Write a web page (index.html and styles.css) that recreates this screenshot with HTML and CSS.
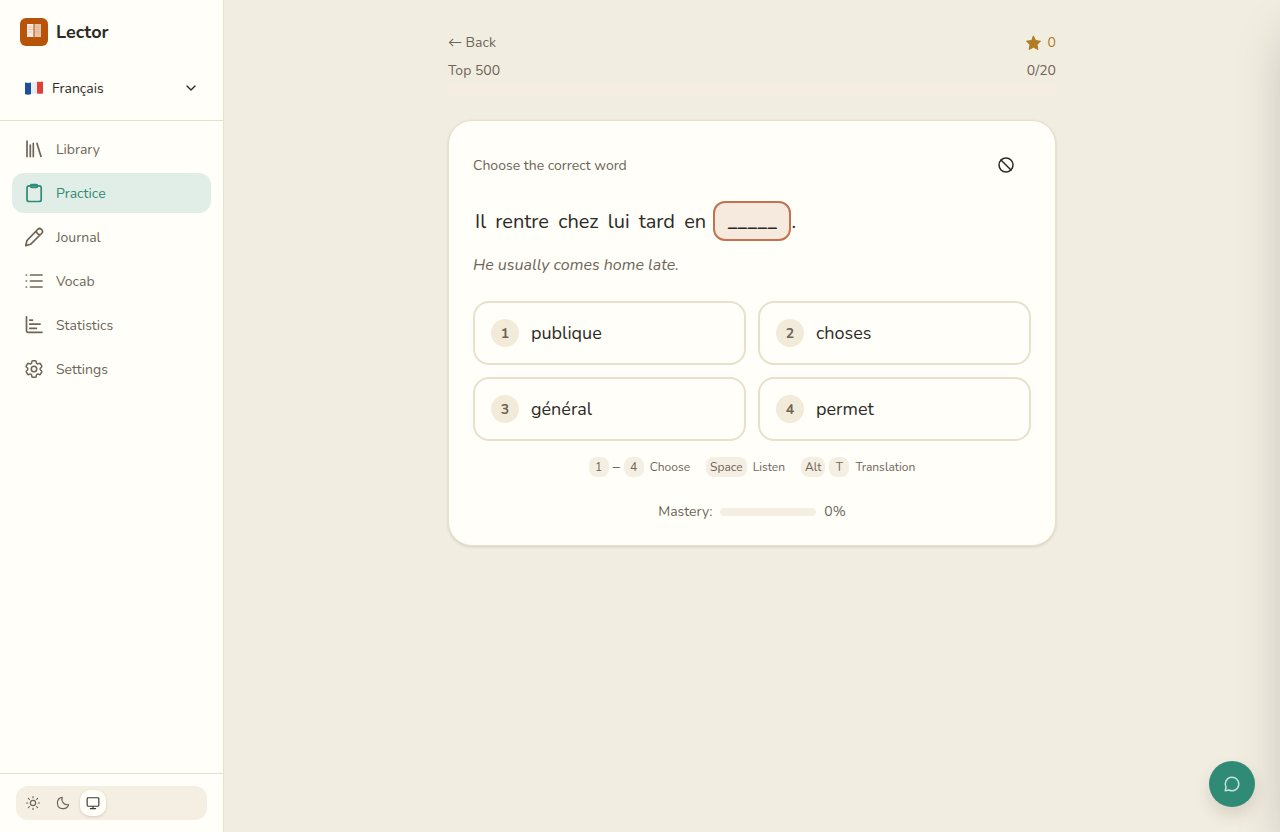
FILE: index.html
```html
<!DOCTYPE html>
<html lang="en">
<head>
<meta charset="utf-8">
<meta name="viewport" content="width=device-width, initial-scale=1">
<title>Lector</title>
<link rel="stylesheet" href="styles.css">
</head>
<body>
<div class="app">
  <aside class="sidebar">
    <div class="brand">
      <svg class="brand-logo" viewBox="0 0 28 28" aria-hidden="true">
        <rect width="28" height="28" rx="6" fill="#b8540a"/>
        <path d="M7 6h6.500v13H7z" fill="#f7e9dd"/>
        <path d="M14.500 6H21v13h-6.500z" fill="#e6c3a6"/>
        <path d="M13.500 6.500h1V19.500h-1z" fill="#cf8a57"/>
        <path d="M8.500 9h3.500M8.500 11.500h4M8.500 14h3M16 9h3.500M16 11.500h3.500M16 14h3" stroke="#d9b69b" stroke-width=".7"/>
      </svg>
      <span class="brand-name">Lector</span>
    </div>
    <div class="language">
      <svg class="flag" viewBox="0 0 20 16" aria-hidden="true">
        <path d="M1 2.500q3 .9 6 .1v11.600q-3 .8-6 .1z" fill="#1d4f9c"/>
        <path d="M7 2.600q3-1 6-.8v11.700q-3-.1-6 .7z" fill="#e9ecef"/>
        <path d="M13 1.800q3 .2 6-.3v12q-3 .5-6 0z" fill="#df3e3b"/>
      </svg>
      <select class="language-select" aria-label="Language"><option>Français</option></select>
      <svg class="icon-chevron" viewBox="0 0 24 24" aria-hidden="true"><path d="m6 9 6 6 6-6"/></svg>
    </div>
    <nav class="nav">
      <a class="nav-item" href="#library">
        <svg class="icon" viewBox="0 0 20 20"><path d="M3 2.200v15.400M6.300 6.200v11.400M9.300 4.400v13.200M13 4.400l4 13"/></svg>Library</a>
      <a class="nav-item active" href="#practice" aria-current="page">
        <svg class="icon" viewBox="0 0 20 20"><rect x="3" y="2.800" width="14.200" height="15.700" rx="2"/><rect x="6.500" y="1.500" width="7" height="3" rx="1.300"/></svg>Practice</a>
      <a class="nav-item" href="#journal">
        <svg class="icon" viewBox="0 0 20 20"><path d="M13.600 2.500a2.800 2.800 0 0 1 4 4L6.500 17.300 1.700 18.600l1.200-4.900zM12.400 3.700a3.800 3.800 0 0 0 4 4"/></svg>Journal</a>
      <a class="nav-item" href="#vocab">
        <svg class="icon" viewBox="0 0 20 20"><path d="M6.500 4h11.500M6.500 10h11.500M6.500 16h11.500M2.300 4h.2M2.300 10h.2M2.300 16h.2"/></svg>Vocab</a>
      <a class="nav-item" href="#statistics">
        <svg class="icon" viewBox="0 0 20 20"><path d="M2.500 1.800v14a1.500 1.500 0 0 0 1.500 1.500h14M5.800 5.100h2.700M5.800 9.200h10.200M5.800 13.300h6.600"/></svg>Statistics</a>
      <a class="nav-item" href="#settings">
        <svg class="icon" viewBox="1 1 22 22"><path d="M9.594 3.940c.09-.542.56-.94 1.110-.94h2.593c.55 0 1.020.398 1.110.94l.213 1.281c.063.374.313.686.645.87.074.04.147.083.22.127.325.196.72.257 1.075.124l1.217-.456a1.125 1.125 0 0 1 1.370.49l1.296 2.247a1.125 1.125 0 0 1-.26 1.431l-1.003.827c-.293.241-.438.613-.43.992a7.723 7.723 0 0 1 0 .255c-.008.378.137.75.43.991l1.004.827c.424.35.534.955.26 1.430l-1.298 2.247a1.125 1.125 0 0 1-1.369.491l-1.217-.456c-.355-.133-.75-.072-1.076.124a6.470 6.470 0 0 1-.22.128c-.331.183-.581.495-.644.869l-.213 1.281c-.09.543-.56.94-1.110.94h-2.594c-.55 0-1.019-.398-1.110-.94l-.213-1.281c-.062-.374-.312-.686-.644-.87a6.520 6.520 0 0 1-.22-.127c-.325-.196-.72-.257-1.076-.124l-1.217.456a1.125 1.125 0 0 1-1.369-.49l-1.297-2.247a1.125 1.125 0 0 1 .26-1.431l1.004-.827c.292-.24.437-.613.43-.991a6.932 6.932 0 0 1 0-.255c.007-.38-.138-.751-.43-.992l-1.004-.827a1.125 1.125 0 0 1-.26-1.430l1.297-2.247a1.125 1.125 0 0 1 1.370-.491l1.216.456c.356.133.751.072 1.076-.124.072-.044.146-.086.22-.128.332-.183.582-.495.644-.869z"/><circle cx="12" cy="12" r="3"/></svg>Settings</a>
    </nav>
    <div class="sidebar-footer">
      <div class="theme-switch" role="group" aria-label="Theme">
        <button class="theme-button" type="button" aria-label="Light"><svg class="icon-small" viewBox="0 0 24 24"><circle cx="12" cy="12" r="4.500"/><path d="M12 1v2M12 21v2M1 12h2M21 12h2M4.200 4.200l1.500 1.500M18.300 18.300l1.500 1.500M4.200 19.800l1.500-1.500M18.300 5.700l1.500-1.500"/></svg></button>
        <button class="theme-button" type="button" aria-label="Dark"><svg class="icon-small" viewBox="0 0 24 24"><path d="M10.500 2.300A9.800 9.800 0 1 0 21.700 14.500C15.500 16.500 8.500 11 10.500 2.300z"/></svg></button>
        <button class="theme-button selected" type="button" aria-label="System" aria-pressed="true"><svg class="icon-small" viewBox="0 0 24 24"><rect x="2" y="3" width="20" height="14.500" rx="1.500"/><path d="M12 17.500v4M7.500 21.500h9"/></svg></button>
      </div>
    </div>
  </aside>

  <main class="main">
    <div class="practice">
      <header class="session">
        <div class="session-row">
          <a class="back" href="#back">← Back</a>
          <span class="score"><svg class="star" viewBox="0 0 16 16" aria-hidden="true"><path d="m7.500 1.200 2.100 4.400 4.900.6-3.500 3.400.9 4.900-4.400-2.300-4.400 2.300.9-4.900L.5 6.200l4.900-.6z"/></svg>0</span>
        </div>
        <div class="session-row"><span>Top 500</span><span>0/20</span></div>
        <div class="session-progress" role="progressbar" aria-label="Session progress" aria-valuenow="0" aria-valuemin="0" aria-valuemax="20"></div>
      </header>

      <section class="card">
        <div class="card-header">
          <span>Choose the correct word</span>
          <button class="ignore-button" type="button" aria-label="Ignore this sentence"><svg class="icon-ban" viewBox="0 0 20 20"><circle cx="10" cy="10" r="7"/><path d="m5 5 10 10"/></svg></button>
        </div>
        <p class="sentence"><span class="word">Il</span> <span class="word">rentre</span> <span class="word">chez</span> <span class="word">lui</span> <span class="word">tard</span> <span class="word">en</span> <span class="blank">_____</span>.</p>
        <p class="translation">He usually comes home late.</p>
        <div class="options">
          <button class="option" type="button"><span class="option-number">1</span>publique</button>
          <button class="option" type="button"><span class="option-number">2</span>choses</button>
          <button class="option" type="button"><span class="option-number">3</span>général</button>
          <button class="option" type="button"><span class="option-number">4</span>permet</button>
        </div>
        <div class="hints">
          <span class="hint"><span class="keys"><kbd>1</kbd><span class="range">–</span><kbd>4</kbd></span>Choose</span>
          <span class="hint"><kbd>Space</kbd>Listen</span>
          <span class="hint"><span class="keys"><kbd>Alt</kbd><kbd>T</kbd></span>Translation</span>
        </div>
        <div class="mastery"><span>Mastery:</span><div class="mastery-bar" role="progressbar" aria-label="Mastery" aria-valuenow="0"></div><span>0%</span></div>
      </section>
    </div>
  </main>
</div>
<div class="drawer" aria-hidden="true"></div>
<button class="chat-button" type="button" aria-label="Open chat"><svg class="icon-chat" viewBox="0 0 24 24"><path d="M3 21l1-5A9 9 0 1 1 8 20z"/></svg></button>
</body>
</html>
```

FILE: styles.css
```css
* { box-sizing: border-box; }

body {
  margin: 0;
  background: #f2ede1;
  color: #2d2a26;
  font-family: Nunito, Lato, "Open Sans", sans-serif;
  font-size: 14px;
  line-height: 21px;
}

button, select { font: inherit; color: inherit; }
button { cursor: pointer; border: 0; background: none; }
p { margin: 0; }
a { color: inherit; text-decoration: none; }
svg { display: block; flex: none; fill: none; stroke-linecap: round; stroke-linejoin: round; }

.app { display: flex; min-height: 100vh; }

.sidebar {
  display: flex;
  flex-direction: column;
  flex: none;
  width: 224px;
  height: 100vh;
  position: sticky;
  top: 0;
  background: #fffef9;
  border-right: 1px solid #e8e0cc;
}
.brand { display: flex; align-items: center; gap: 8px; padding: 18px 20px 0; }
.brand-logo { width: 28px; height: 28px; }
.brand-name { font-size: 18px; line-height: 28px; font-weight: 700; }
.language {
  display: flex;
  align-items: center;
  gap: 8px;
  padding: 27px 24px 17px;
  border-bottom: 1px solid #e8e0cc;
}
.flag { width: 20px; height: 16px; }
.language-select {
  flex: 1;
  min-width: 0;
  height: 30px;
  padding: 0;
  border: 0;
  background: none;
  appearance: none;
}
.icon-chevron { width: 16px; height: 16px; stroke: #2d2a26; stroke-width: 2; pointer-events: none; }

.nav { display: flex; flex-direction: column; gap: 4px; padding: 8px 12px; flex: 1; }
.nav-item {
  display: flex;
  align-items: center;
  gap: 12px;
  height: 40px;
  padding: 0 12px;
  border-radius: 12px;
  color: #6e6558;
}
.nav-item.active { background: #e1eee8; color: #2f8a76; }
.icon { width: 20px; height: 20px; stroke: currentColor; stroke-width: 1.7; }

.sidebar-footer { padding: 12px 16px; border-top: 1px solid #e8e0cc; }
.theme-switch { display: flex; gap: 4px; padding: 4px; border-radius: 12px; background: #f5eee2; }
.theme-button {
  display: grid;
  place-items: center;
  width: 26px;
  height: 26px;
  padding: 0;
  border-radius: 10px;
  color: #6e6558;
}
.theme-button.selected { background: #fffef9; color: #3b3834; box-shadow: 0 1px 3px rgba(60, 50, 30, .18); }
.icon-small { width: 14px; height: 14px; stroke: currentColor; stroke-width: 2; }

.main { flex: 1; min-width: 0; padding: 32px; }
.practice { max-width: 608px; margin: 0 auto; }
.session { color: #6e6558; }
.session-row { display: flex; justify-content: space-between; margin-bottom: 7px; }
.session-row + .session-row { margin-bottom: 3px; }
.score { display: flex; align-items: center; gap: 6px; color: #b07d22; }
.star { width: 16px; height: 16px; fill: #b07d22; stroke: #b07d22; stroke-width: 1; }
.session-progress { height: 12px; border-radius: 6px; background: #f5ede2; }

.card {
  margin-top: 24px;
  padding: 24px 24px 23px;
  border: 1px solid #e8e0cc;
  border-radius: 24px;
  background: #fffef9;
  box-shadow: 0 1px 3px rgba(60, 50, 30, .16);
}
.card-header { display: flex; align-items: center; justify-content: space-between; height: 40px; color: #6e6558; }
.ignore-button { display: grid; place-items: center; height: 40px; padding: 0 15px; }
.icon-ban { width: 20px; height: 20px; stroke: #2d2a26; stroke-width: 1.5; }

.sentence { margin-top: 16px; font-size: 20px; line-height: 42px; }
.word { padding: 0 2px; }
.blank {
  display: inline-block;
  height: 40px;
  padding: 0 12px;
  border: 2px solid #c4714f;
  border-radius: 12px;
  background: #f6eadf;
  line-height: 38px;
  font-weight: 700;
  vertical-align: top;
}
.translation { margin-top: 10px; color: #6e6558; font-size: 16px; line-height: 24px; font-style: italic; }

.options { display: grid; grid-template-columns: 1fr 1fr; gap: 12px; margin-top: 24px; }
.option {
  display: flex;
  align-items: center;
  gap: 12px;
  height: 64px;
  padding: 0 16px;
  border: 2px solid #e8e0cc;
  border-radius: 16px;
  font-size: 18px;
  text-align: left;
}
.option-number {
  display: grid;
  place-items: center;
  width: 28px;
  height: 28px;
  border-radius: 50%;
  background: #f2ebda;
  color: #6e6558;
  font-size: 14px;
  font-weight: 700;
}

.hints { display: flex; justify-content: center; gap: 16px; margin-top: 16px; color: #6e6558; font-size: 12px; line-height: 20px; }
.hint { display: flex; align-items: center; gap: 6px; }
.keys { display: flex; gap: 4px; }
.range { font-size: 14px; font-weight: 600; }
kbd {
  min-width: 20px;
  padding: 0 4px;
  border-radius: 8px;
  background: #f5eee2;
  font-family: inherit;
  font-size: 12px;
  text-align: center;
}
.mastery { display: flex; align-items: center; justify-content: center; gap: 8px; margin-top: 24px; color: #6e6558; }
.mastery-bar { width: 96px; height: 8px; border-radius: 4px; background: #f5eee2; }

/* Closed drawer parked past the right edge; its shadow still falls on the page */
.drawer {
  position: fixed;
  top: 0;
  bottom: 0;
  left: 100%;
  width: 384px;
  box-shadow: 0 25px 50px -12px rgba(0, 0, 0, .25);
}
.chat-button {
  position: fixed;
  right: 25px;
  bottom: 25px;
  display: grid;
  place-items: center;
  width: 46px;
  height: 46px;
  padding: 0;
  border-radius: 50%;
  background: #2f8a76;
  box-shadow: 0 8px 16px rgba(60, 50, 30, .14);
}
.icon-chat { width: 18px; height: 18px; stroke: #c3e2d8; stroke-width: 2; }
```
